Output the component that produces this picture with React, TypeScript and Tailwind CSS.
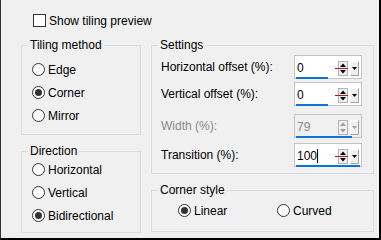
const font = { fontFamily: '"Liberation Sans", Arial, sans-serif' };

function Radio({ label, checked }: { label: string; checked?: boolean }) {
  return (
    <div className="flex items-center gap-[3px] h-[23px]">
      <span className="w-[13px] h-[13px] rounded-full border border-[#333] bg-white flex items-center justify-center">
        {checked && <span className="w-[7px] h-[7px] rounded-full bg-[#333]" />}
      </span>
      <span>{label}</span>
    </div>
  );
}

function Spin({
  value,
  bar,
  disabled,
  caret,
}: {
  value: string;
  bar: number;
  disabled?: boolean;
  caret?: boolean;
}) {
  const arrow = disabled ? "#a0a0a0" : "#000";
  return (
    <div
      className={`w-[68px] h-[24px] border border-[#c4c4c4] flex flex-col ${
        disabled ? "bg-[#f0f0f0]" : "bg-white"
      }`}
    >
      <div className="flex items-center flex-1 pl-[2px] pr-[2px] pt-[3px]">
        <span className={`flex-1 flex items-center ${disabled ? "text-[#8a8a8a]" : "text-black"}`}>
          {value}
          {caret && <span className="w-px h-[14px] bg-black" />}
        </span>
        <div className="relative flex items-center gap-[2px]">
          {!disabled && (
            <span className="absolute left-[-3px] right-[11px] top-[7px] h-px bg-[#a02020]" />
          )}
          <svg width="10" height="15" viewBox="0 0 10 15">
            <rect x="0.5" y="0.5" width="9" height="14" fill="#f0f0f0" stroke="#b4b4b4" />
            <path d="M2 6 L5 2.5 L8 6 Z" fill={arrow} />
            <path d="M2 9 L5 12.5 L8 9 Z" fill={arrow} />
          </svg>
          <svg width="9" height="15" viewBox="0 0 9 15">
            <rect x="0" y="0" width="9" height="15" fill="#f0f0f0" />
            <path d="M0.5 14.5 V0.5 H8.5" stroke="#fff" fill="none" />
            <path d="M0.5 14.5 H8.5 V0.5" stroke="#a0a0a0" fill="none" />
            <path d="M2 6 L4.5 9 L7 6 Z" fill={arrow} />
          </svg>
        </div>
      </div>
      <div className="h-[3px] pl-[1px] pb-[1px]">
        <div className="h-[2px] bg-[#0a74d8]" style={{ width: bar }} />
      </div>
    </div>
  );
}

function Group({
  title,
  className,
  children,
}: {
  title: string;
  className: string;
  children: React.ReactNode;
}) {
  return (
    <fieldset className={`border border-[#dcdcdc] ${className}`}>
      <legend className="ml-[6px] px-[2px] leading-[13px]">{title}</legend>
      {children}
    </fieldset>
  );
}

export default function App() {
  return (
    <div
      className="w-[381px] h-[240px] bg-[#f0f0f0] text-[12px] text-black border-l border-l-[#333] border-r-2 border-b-2 border-r-black border-b-black"
      style={font}
    >
      <div className="flex items-center gap-[3px] pl-[32px] pt-[13px] h-[28px]">
        <span className="w-[13px] h-[13px] border border-[#333] bg-white" />
        <span>Show tiling preview</span>
      </div>
      <div className="flex gap-[10px] pl-[20px] pt-[11px]">
        <div className="flex flex-col gap-[10px] w-[120px]">
          <Group title="Tiling method" className="h-[96px]">
            <div className="pl-[10px] pt-[6px]">
              <Radio label="Edge" />
              <Radio label="Corner" checked />
              <Radio label="Mirror" />
            </div>
          </Group>
          <Group title="Direction" className="h-[88px]">
            <div className="pl-[10px]">
              <Radio label="Horizontal" />
              <Radio label="Vertical" />
              <Radio label="Bidirectional" checked />
            </div>
          </Group>
        </div>
        <div className="flex flex-col gap-[10px] w-[223px]">
          <Group title="Settings" className="h-[135px]">
            <div className="flex flex-col gap-[3px] pl-[9px] pr-[11px] pt-[3px]">
              <div className="flex items-center justify-between h-[24px]">
                <span>Horizontal offset (%):</span>
                <Spin value="0" bar={32} />
              </div>
              <div className="flex items-center justify-between h-[24px]">
                <span>Vertical offset (%):</span>
                <Spin value="0" bar={32} />
              </div>
              <div className="flex items-center justify-between h-[24px] mt-[5px]">
                <span className="text-[#8a8a8a]">Width (%):</span>
                <Spin value="79" bar={56} disabled />
              </div>
              <div className="flex items-center justify-between h-[22px] mt-[3px]">
                <span>Transition (%):</span>
                <Spin value="100" bar={64} caret />
              </div>
            </div>
          </Group>
          <Group title="Corner style" className="h-[48px]">
            <div className="flex pl-[26px] pt-[2px]">
              <div className="w-[99px]">
                <Radio label="Linear" checked />
              </div>
              <Radio label="Curved" />
            </div>
          </Group>
        </div>
      </div>
    </div>
  );
}
